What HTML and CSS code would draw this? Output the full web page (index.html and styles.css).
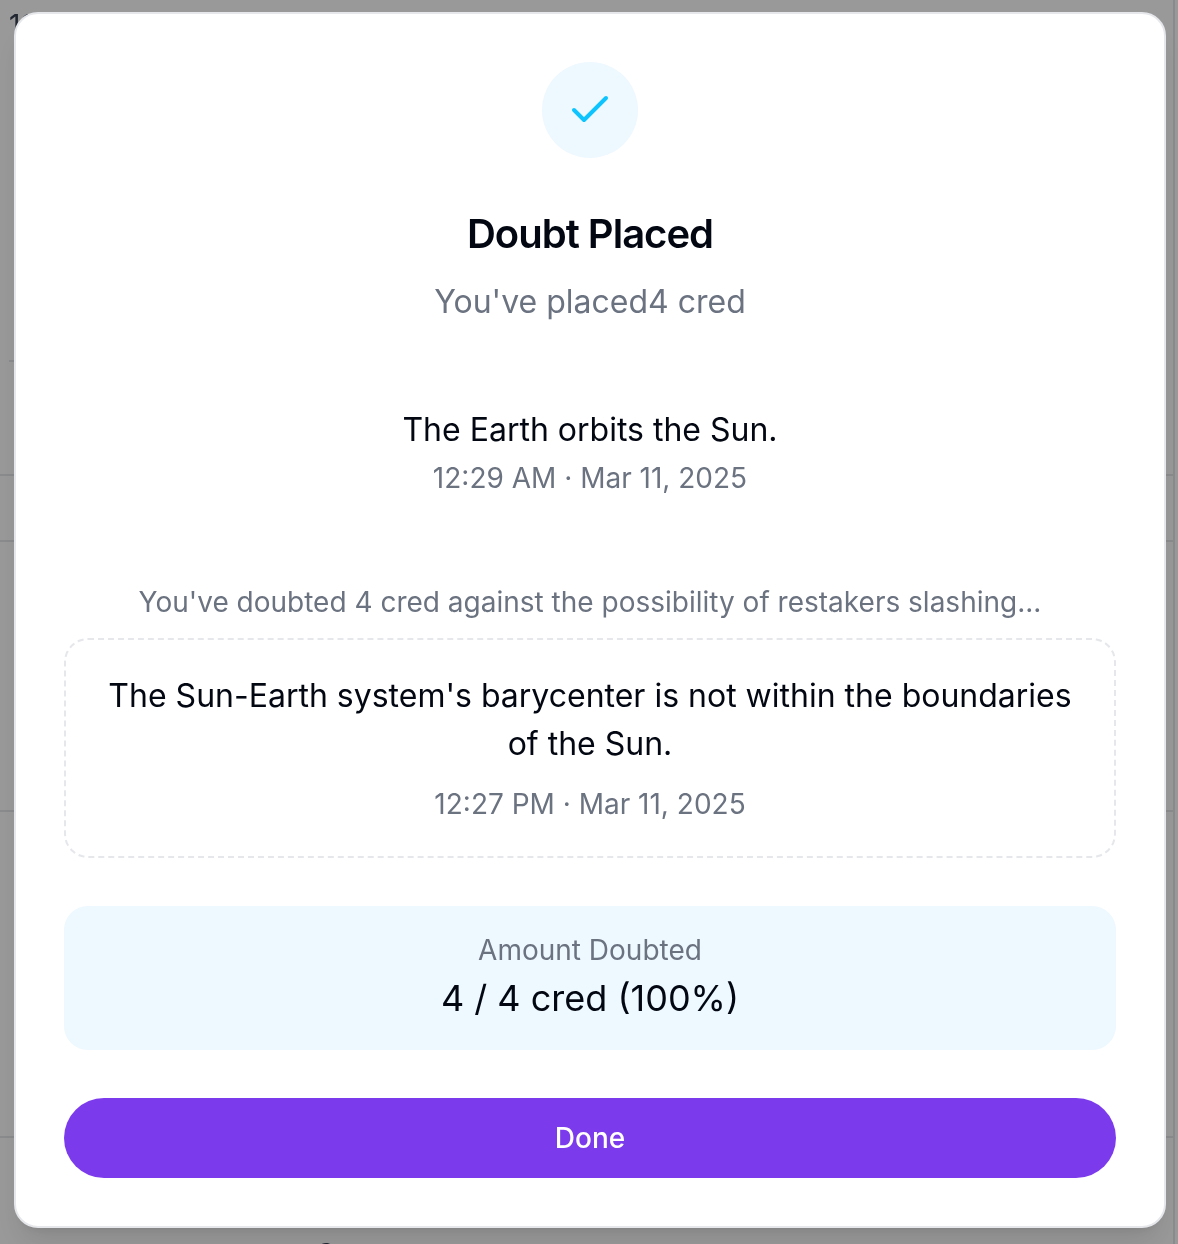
FILE: index.html
```html
<!DOCTYPE html>
<html lang="en">
<head>
<meta charset="utf-8">
<title>Doubt Placed</title>
<link rel="stylesheet" href="styles.css">
</head>
<body>
<div class="feed" aria-hidden="true">
  <div class="row row-lead">12</div>
  <div class="row row-medium"></div>
  <div class="row row-short"></div>
  <div class="row row-tall"></div>
  <div class="row row-taller"></div>
  <div class="row row-last"><span>t</span><span>C</span></div>
</div>
<div class="overlay">
  <main class="dialog" role="dialog" aria-modal="true" aria-labelledby="dialog-title">
    <div class="badge">
      <svg class="check" viewBox="0 0 24 24" aria-hidden="true"><path d="M20 6 9 17l-5-5"/></svg>
    </div>
    <header class="heading">
      <h1 class="title" id="dialog-title">Doubt Placed</h1>
      <p class="subtitle">You've placed4 cred</p>
    </header>
    <section class="point">
      <p class="statement">The Earth orbits the Sun.</p>
      <p class="meta">12:29 AM · Mar 11, 2025</p>
    </section>
    <section class="doubt">
      <p class="meta">You've doubted 4 cred against the possibility of restakers slashing...</p>
      <div class="counterpoint">
        <p class="statement">The Sun-Earth system's barycenter is not within the boundaries of the Sun.</p>
        <p class="meta">12:27 PM · Mar 11, 2025</p>
      </div>
    </section>
    <section class="amount">
      <p class="meta">Amount Doubted</p>
      <p class="total">4 / 4 cred (100%)</p>
    </section>
    <button class="done" type="button">Done</button>
  </main>
</div>
</body>
</html>
```
FILE: styles.css
```css
* {
  box-sizing: border-box;
}

body {
  margin: 0;
  font-family: Inter, "Liberation Sans", sans-serif;
  color: #030712;
  background: #fff;
}

h1,
p {
  margin: 0;
}

/* Page behind the dialog */
.feed {
  position: fixed;
  inset: 0;
  overflow: hidden;
  margin-right: 3px;
  border-right: 2px solid #e5e7eb;
  color: #374151;
  font-size: 28px;
  line-height: 40px;
}

.row {
  border-bottom: 2px solid #e5e7eb;
}

.row-lead {
  height: 362px;
  margin: 0 16px 0 9px;
  padding-top: 5px;
}

.row-medium {
  height: 114px;
}

.row-short {
  height: 66px;
}

.row-tall {
  height: 270px;
}

.row-taller {
  height: 326px;
}

.row-last {
  display: flex;
  gap: 66px;
  padding: 96px 0 0 240px;
}

.overlay {
  position: relative;
  min-height: 100vh;
  padding: 12px 12px 16px 14px;
  background: rgb(0 0 0 / 40%);
}

.dialog {
  display: flex;
  flex-direction: column;
  padding: 48px;
  border: 2px solid #e5e7eb;
  border-radius: 24px;
  background: #fff;
  box-shadow: 0 20px 30px -6px rgb(0 0 0 / 10%), 0 8px 12px -8px rgb(0 0 0 / 10%);
  text-align: center;
}

.badge {
  display: grid;
  place-items: center;
  align-self: center;
  width: 96px;
  height: 96px;
  border-radius: 50%;
  background: #edf8ff;
}

.check {
  width: 48px;
  height: 48px;
  fill: none;
  stroke: #0ec4ff;
  stroke-width: 2;
  stroke-linecap: round;
  stroke-linejoin: round;
}

.heading {
  display: flex;
  flex-direction: column;
  gap: 24px;
  margin-top: 56px;
}

.title {
  font-size: 40px;
  line-height: 40px;
  font-weight: 600;
  letter-spacing: -1px;
}

.subtitle {
  font-size: 32px;
  line-height: 48px;
  color: #6b7280;
}

.point {
  margin-top: 80px;
}

.statement {
  font-size: 32px;
  line-height: 48px;
}

.meta {
  font-size: 28px;
  line-height: 40px;
  color: #6b7280;
}

.point .meta {
  margin-top: 4px;
}

.doubt {
  margin-top: 84px;
}

.counterpoint {
  margin-top: 16px;
  padding: 32px 40px;
  border: 2px dashed #e5e7eb;
  border-radius: 24px;
}

.counterpoint .meta {
  margin-top: 16px;
}

.amount {
  margin-top: 48px;
  padding: 24px;
  border-radius: 24px;
  background: #edf8ff;
}

.total {
  font-size: 36px;
  line-height: 56px;
}

.done {
  height: 80px;
  margin-top: 48px;
  border: 0;
  border-radius: 40px;
  background: #7c3aed;
  color: #fff;
  font-family: inherit;
  font-size: 28px;
  font-weight: 500;
  line-height: 40px;
  cursor: pointer;
}
```
